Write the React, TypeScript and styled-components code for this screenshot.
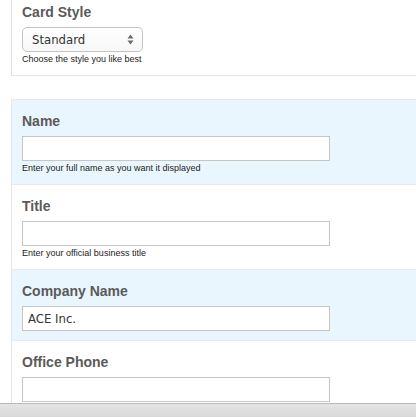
import styled, { createGlobalStyle } from 'styled-components';

const GlobalStyle = createGlobalStyle`
  html, body {
    margin: 0;
    padding: 0;
    overflow: hidden;
    background: #fff;
  }
  * {
    box-sizing: border-box;
  }
`;

const fields = [
  { label: 'Name', help: 'Enter your full name as you want it displayed', value: '', shaded: true },
  { label: 'Title', help: 'Enter your official business title', value: '', shaded: false },
  { label: 'Company Name', help: '', value: 'ACE Inc.', shaded: true },
  { label: 'Office Phone', help: '', value: '', shaded: false },
];

export default function App() {
  return (
    <>
      <GlobalStyle />
      <Page>
        <StyleCard>
          <Label>Card Style</Label>
          <SelectBox>
            <span>Standard</span>
            <svg width="7" height="11" viewBox="0 0 7 11">
              <path d="M3.5 0.5 L6.5 4.5 L0.5 4.5 Z" fill="#6a6a6a" />
              <path d="M3.5 10.5 L6.5 6.5 L0.5 6.5 Z" fill="#6a6a6a" />
            </svg>
          </SelectBox>
          <Help>Choose the style you like best</Help>
        </StyleCard>

        <FieldsCard>
          {fields.map((f) => (
            <Row key={f.label} $shaded={f.shaded}>
              <Label>{f.label}</Label>
              <TextInput type="text" defaultValue={f.value} />
              {f.help && <Help>{f.help}</Help>}
            </Row>
          ))}
        </FieldsCard>
      </Page>
      <StatusBar />
    </>
  );
}

const Page = styled.div`
  width: 100%;
  overflow: hidden;
  padding-left: 11px;
  font-family: "Liberation Sans", Arial, sans-serif;
`;

const StyleCard = styled.div`
  margin-right: -20px;
  border: 1px solid #e2e2e2;
  border-top: none;
  padding: 3px 10px 9px 10px;
  background: #fff;
`;

const Label = styled.div`
  font-size: 14px;
  font-weight: bold;
  line-height: 18px;
  color: #5a5a5a;
  margin-bottom: 6px;
`;

const SelectBox = styled.div`
  width: 121px;
  height: 25px;
  display: flex;
  align-items: center;
  justify-content: space-between;
  padding: 0 8px 0 9px;
  border: 1px solid #c4c4c4;
  border-radius: 5px;
  background: linear-gradient(#ffffff, #f7f7f7);
  font-family: "DejaVu Sans Condensed", "DejaVu Sans", sans-serif;
  font-stretch: condensed;
  font-size: 13px;
  color: #333;
`;

const Help = styled.div`
  font-size: 9px;
  line-height: 13px;
  color: #222;
  margin-top: 1px;
`;

const FieldsCard = styled.div`
  margin-top: 23px;
  margin-right: -20px;
  border: 1px solid #e6e6e6;
  border-top-color: #ece8e3;
  border-bottom: none;
`;

const Row = styled.div<{ $shaded: boolean }>`
  padding: 12px 10px 9px 10px;
  background: ${(p) => (p.$shaded ? '#eaf6fd' : '#ffffff')};
  border-bottom: 1px solid #e2ecf2;
`;

const TextInput = styled.input`
  display: block;
  width: 308px;
  height: 25px;
  margin: 0;
  padding: 0 5px;
  border: 1px solid #c6c6c6;
  border-radius: 0;
  background: #fff;
  outline: none;
  font-family: "DejaVu Sans Condensed", "DejaVu Sans", sans-serif;
  font-stretch: condensed;
  font-size: 13px;
  color: #333;
`;

const StatusBar = styled.div`
  position: fixed;
  left: 0;
  right: 0;
  top: 403px;
  height: 14px;
  border-top: 1px solid #b9b9b9;
  background: linear-gradient(#e4e4e4, #d8d8d8);
`;
